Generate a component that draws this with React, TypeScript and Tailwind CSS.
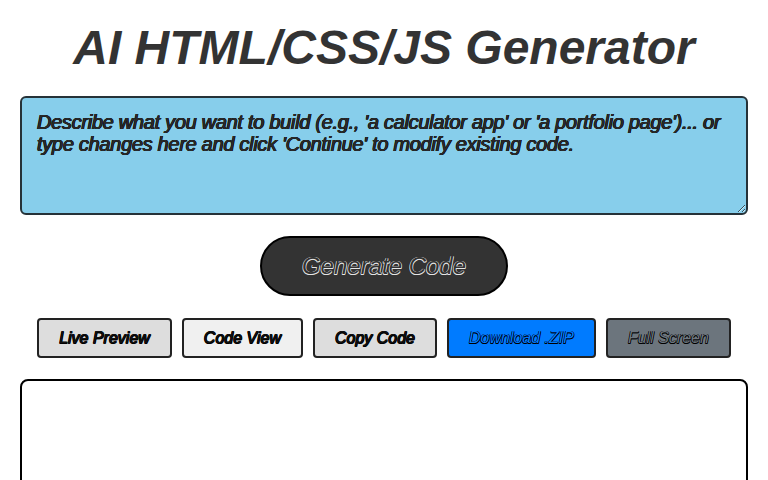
import { useState } from 'react'

const TABS = [
  { label: 'Live Preview', cls: 'bg-[#dddddd] text-[#111]' },
  { label: 'Code View', cls: 'bg-[#f0f0f0] text-[#111]' },
  { label: 'Copy Code', cls: 'bg-[#dddddd] text-[#111]' },
  { label: 'Download .ZIP', cls: 'bg-[#007bff] text-[#007bff]' },
  { label: 'Full Screen', cls: 'bg-[#6c757d] text-[#6c757d]' },
]

// thin outline around glyphs
const darkOutline =
  '[text-shadow:-0.5px_-0.5px_0_#000,0.5px_-0.5px_0_#000,-0.5px_0.5px_0_#000,0.5px_0.5px_0_#000]'
const softOutline =
  '[text-shadow:-0.4px_-0.4px_0_#111,0.4px_-0.4px_0_#111,-0.4px_0.4px_0_#111,0.4px_0.4px_0_#111]'
const lightOutline =
  '[text-shadow:-0.5px_-0.5px_0_#e5e5e5,0.5px_-0.5px_0_#e5e5e5,-0.5px_0.5px_0_#e5e5e5,0.5px_0.5px_0_#e5e5e5]'

export default function App() {
  const [prompt, setPrompt] = useState(
    "Describe what you want to build (e.g., 'a calculator app' or 'a portfolio page')... or type changes here and click 'Continue' to modify existing code."
  )

  return (
    <div className="min-h-screen bg-white p-5 font-['Liberation_Sans',Arial,sans-serif] italic">
      <h1 className="mb-[21px] text-center text-[48px] leading-[55px] font-bold text-[#333]">
        AI HTML/CSS/JS Generator
      </h1>

      <textarea
        value={prompt}
        onChange={(e) => setPrompt(e.target.value)}
        className={`block h-[119px] w-full rounded-md border-2 border-[#263238] bg-[#87ceeb] px-[15px] pt-[13px] pb-[15px] text-[20px] leading-[22px] tracking-[-0.3px] text-[#2a2a2a] italic outline-none ${softOutline}`}
      />

      <div className="mt-[21px] flex justify-center">
        <button
          className={`h-[60px] rounded-full border-2 border-black bg-[#333] px-10 text-[24px] text-[#333] italic ${lightOutline}`}
        >
          Generate Code
        </button>
      </div>

      <div className="mt-[22px] flex justify-center gap-[10px]">
        {TABS.map((t) => (
          <button
            key={t.label}
            className={`h-10 rounded border-2 border-[#222] px-5 text-[16px] italic ${t.cls} ${darkOutline}`}
          >
            {t.label}
          </button>
        ))}
      </div>

      <div className="mt-[21px] h-[400px] rounded-lg border-2 border-black bg-white" />
    </div>
  )
}
